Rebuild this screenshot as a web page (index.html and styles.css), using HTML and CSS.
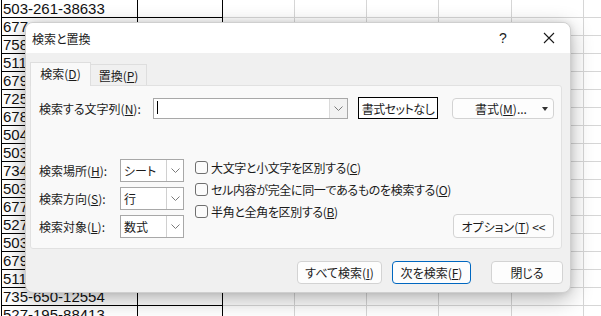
FILE: index.html
```html
<!DOCTYPE html>
<html lang="ja">
<head>
<meta charset="utf-8">
<title>検索と置換</title>
<link rel="stylesheet" href="styles.css">
</head>
<body>
<div class="sheet">
  <div class="row"><div class="c a">503-261-38633</div><div class="c b"></div><div class="c g"></div><div class="c g"></div><div class="c g"></div><div class="c g w73"></div><div class="c g"></div><div class="c g last"></div></div>
  <div class="row"><div class="c a">677-464-91632</div><div class="c b"></div><div class="c g"></div><div class="c g"></div><div class="c g"></div><div class="c g w73"></div><div class="c g"></div><div class="c g last"></div></div>
  <div class="row"><div class="c a">758-310-44721</div><div class="c b"></div><div class="c g"></div><div class="c g"></div><div class="c g"></div><div class="c g w73"></div><div class="c g"></div><div class="c g last"></div></div>
  <div class="row"><div class="c a">511-802-36150</div><div class="c b"></div><div class="c g"></div><div class="c g"></div><div class="c g"></div><div class="c g w73"></div><div class="c g"></div><div class="c g last"></div></div>
  <div class="row"><div class="c a">679-145-20983</div><div class="c b"></div><div class="c g"></div><div class="c g"></div><div class="c g"></div><div class="c g w73"></div><div class="c g"></div><div class="c g last"></div></div>
  <div class="row"><div class="c a">725-918-63402</div><div class="c b"></div><div class="c g"></div><div class="c g"></div><div class="c g"></div><div class="c g w73"></div><div class="c g"></div><div class="c g last"></div></div>
  <div class="row"><div class="c a">678-533-17296</div><div class="c b"></div><div class="c g"></div><div class="c g"></div><div class="c g"></div><div class="c g w73"></div><div class="c g"></div><div class="c g last"></div></div>
  <div class="row"><div class="c a">504-276-90318</div><div class="c b"></div><div class="c g"></div><div class="c g"></div><div class="c g"></div><div class="c g w73"></div><div class="c g"></div><div class="c g last"></div></div>
  <div class="row"><div class="c a">503-641-55827</div><div class="c b"></div><div class="c g"></div><div class="c g"></div><div class="c g"></div><div class="c g w73"></div><div class="c g"></div><div class="c g last"></div></div>
  <div class="row"><div class="c a">734-089-21465</div><div class="c b"></div><div class="c g"></div><div class="c g"></div><div class="c g"></div><div class="c g w73"></div><div class="c g"></div><div class="c g last"></div></div>
  <div class="row"><div class="c a">503-372-68014</div><div class="c b"></div><div class="c g"></div><div class="c g"></div><div class="c g"></div><div class="c g w73"></div><div class="c g"></div><div class="c g last"></div></div>
  <div class="row"><div class="c a">677-820-43391</div><div class="c b"></div><div class="c g"></div><div class="c g"></div><div class="c g"></div><div class="c g w73"></div><div class="c g"></div><div class="c g last"></div></div>
  <div class="row"><div class="c a">527-614-02758</div><div class="c b"></div><div class="c g"></div><div class="c g"></div><div class="c g"></div><div class="c g w73"></div><div class="c g"></div><div class="c g last"></div></div>
  <div class="row"><div class="c a">503-957-31806</div><div class="c b"></div><div class="c g"></div><div class="c g"></div><div class="c g"></div><div class="c g w73"></div><div class="c g"></div><div class="c g last"></div></div>
  <div class="row"><div class="c a">679-238-74150</div><div class="c b"></div><div class="c g"></div><div class="c g"></div><div class="c g"></div><div class="c g w73"></div><div class="c g"></div><div class="c g last"></div></div>
  <div class="row"><div class="c a">511-406-89237</div><div class="c b"></div><div class="c g"></div><div class="c g"></div><div class="c g"></div><div class="c g w73"></div><div class="c g"></div><div class="c g last"></div></div>
  <div class="row"><div class="c a">735-650-12554</div><div class="c b"></div><div class="c g"></div><div class="c g"></div><div class="c g"></div><div class="c g w73"></div><div class="c g"></div><div class="c g last"></div></div>
  <div class="row"><div class="c a">527-195-88413</div><div class="c b"></div><div class="c g"></div><div class="c g"></div><div class="c g"></div><div class="c g w73"></div><div class="c g"></div><div class="c g last"></div></div>
</div>

<div class="dialog">
  <div class="titlebar">
    <span class="title">検索と置換</span>
    <span class="help">?</span>
    <span class="close"><svg width="12" height="12" viewBox="0 0 12 12"><path d="M1 1 L11 11 M11 1 L1 11" stroke="#1a1a1a" stroke-width="1.1" fill="none"/></svg></span>
  </div>
  <div class="dbody">
    <div class="tabs">
      <div class="tab active">検索(<u>D</u>)</div>
      <div class="tab">置換(<u>P</u>)</div>
    </div>
    <div class="panel">
      <div class="find-row">
        <span class="lbl find-lbl">検索する文字列(<u>N</u>):</span>
        <div class="combo">
          <span class="caret"></span>
          <span class="drop combo-drop"><svg width="9" height="5" viewBox="0 0 9 5"><path d="M0.5 0.5 L4.5 4.5 L8.5 0.5" stroke="#7a7a7a" stroke-width="1" fill="none"/></svg></span>
        </div>
        <button class="fmt-none">書式セットなし</button>
        <button class="btn fmt">書式(<u>M</u>)...<span class="tri"></span></button>
      </div>
      <div class="options">
        <div class="selects">
          <div class="sel-row"><span class="lbl sel-lbl">検索場所(<u>H</u>):</span><div class="select"><span class="val">シート</span><span class="drop sel-drop"><svg width="9" height="5" viewBox="0 0 9 5"><path d="M0.5 0.5 L4.5 4.5 L8.5 0.5" stroke="#7a7a7a" stroke-width="1" fill="none"/></svg></span></div></div>
          <div class="sel-row"><span class="lbl sel-lbl">検索方向(<u>S</u>):</span><div class="select"><span class="val">行</span><span class="drop sel-drop"><svg width="9" height="5" viewBox="0 0 9 5"><path d="M0.5 0.5 L4.5 4.5 L8.5 0.5" stroke="#7a7a7a" stroke-width="1" fill="none"/></svg></span></div></div>
          <div class="sel-row"><span class="lbl sel-lbl">検索対象(<u>L</u>):</span><div class="select"><span class="val">数式</span><span class="drop sel-drop"><svg width="9" height="5" viewBox="0 0 9 5"><path d="M0.5 0.5 L4.5 4.5 L8.5 0.5" stroke="#7a7a7a" stroke-width="1" fill="none"/></svg></span></div></div>
        </div>
        <div class="checks">
          <div class="chk"><span class="box"></span>大文字と小文字を区別する(<u>C</u>)</div>
          <div class="chk"><span class="box"></span>セル内容が完全に同一であるものを検索する(<u>O</u>)</div>
          <div class="chk"><span class="box"></span>半角と全角を区別する(<u>B</u>)</div>
        </div>
        <button class="btn opt">オプション(<u>T</u>) &lt;&lt;</button>
      </div>
    </div>
    <div class="actions">
      <button class="btn act all">すべて検索(<u>I</u>)</button>
      <button class="btn act next">次を検索(<u>F</u>)</button>
      <button class="btn act closebtn">閉じる</button>
    </div>
  </div>
</div>
</body>
</html>
```

FILE: styles.css
```css
html, body {
  margin: 0;
  padding: 0;
  background: #ffffff;
  overflow: hidden;
}

body {
  width: 601px;
  height: 316px;
  position: relative;
  font-family: "Noto Sans CJK JP", "Noto Sans", sans-serif;
  color: #1b1b1b;
}

/* ---------- spreadsheet background ---------- */
.sheet {
  padding-left: 1px;
}

.row {
  display: flex;
  height: 18px;
}

.c {
  box-sizing: border-box;
  height: 18px;
  flex: none;
}

.a {
  width: 137px;
  border-left: 1px solid #000;
  border-right: 1px solid #000;
  border-bottom: 1px solid #000;
  font-family: "Liberation Sans", "DejaVu Sans", sans-serif;
  font-size: 15px;
  line-height: 17px;
  padding-left: 1px;
  color: #111;
  white-space: nowrap;
  overflow: hidden;
}

.b {
  width: 85px;
  border-right: 1px solid #000;
  border-bottom: 1px solid #000;
}

.g {
  width: 72px;
  border-right: 1px solid #d6d6d6;
  border-bottom: 1px solid #d6d6d6;
}

.g.w73 {
  width: 73px;
}

.g.last {
  width: 40px;
}

/* ---------- dialog ---------- */
.dialog {
  position: absolute;
  left: 25px;
  top: 22px;
  width: 546px;
  height: 271px;
  box-sizing: border-box;
  border: 1px solid #cfcfcf;
  border-radius: 8px;
  background: #f0f0f0;
  box-shadow: 0 6px 22px rgba(0, 0, 0, 0.30), 0 0 6px rgba(0, 0, 0, 0.10);
  overflow: hidden;
  font-size: 12px;
  font-feature-settings: "palt" 1;
  white-space: nowrap;
}

.titlebar {
  height: 30px;
  background: #ffffff;
  display: flex;
  align-items: center;
  padding-left: 6px;
}

.title {
  font-size: 12px;
  flex: 1;
}

.help {
  font-family: "Liberation Sans", sans-serif;
  font-size: 14px;
  width: 10px;
  margin-right: 34px;
}

.close {
  display: flex;
  margin-right: 15px;
}

.dbody {
  height: 239px;
  box-sizing: border-box;
  padding: 9px 8px 0 4px;
  display: flex;
  flex-direction: column;
}

/* tabs */
.tabs {
  display: flex;
  align-items: flex-end;
  height: 23px;
}

.tab {
  box-sizing: border-box;
  height: 21px;
  border: 1px solid #dedede;
  border-bottom: none;
  background: #f0f0f0;
  display: flex;
  align-items: center;
  justify-content: center;
  font-size: 12px;
}

.tab.active {
  width: 61px;
  height: 24px;
  background: #f9f9f9;
  margin-bottom: -1px;
  position: relative;
  z-index: 1;
  padding-bottom: 2px;
}

.tab:not(.active) {
  width: 56px;
  border-left: none;
}

/* panel */
.panel {
  box-sizing: border-box;
  height: 164px;
  border: 1px solid #e1e1e1;
  border-radius: 0 3px 3px 3px;
  background: #f9f9f9;
  padding: 11px 7px 0 8px;
}

.find-row {
  display: flex;
  align-items: center;
  height: 22px;
}

.lbl {
  white-space: nowrap;
}

.find-lbl {
  width: 114px;
}

.combo {
  box-sizing: border-box;
  width: 195px;
  height: 21px;
  border: 1px solid #a8a8a8;
  background: #fff;
  display: flex;
  align-items: stretch;
  justify-content: space-between;
}

.caret {
  width: 1px;
  background: #000;
  margin: 2px 0 4px 3px;
}

.drop {
  display: flex;
  align-items: center;
  justify-content: center;
}

.combo-drop {
  width: 17px;
  background: #f2f2f2;
  border-left: 1px solid #dadada;
}

button {
  font-family: inherit;
  font-size: 12px;
  color: #1b1b1b;
  padding: 0;
  margin: 0;
  white-space: nowrap;
  font-feature-settings: "palt" 1;
}

.fmt-none {
  box-sizing: border-box;
  width: 80px;
  height: 22px;
  margin-left: 10px;
  border: 1px solid #000;
  background: #fff;
  letter-spacing: -0.5px;
}

.btn {
  box-sizing: border-box;
  border: 1px solid #d3d3d3;
  border-radius: 4px;
  background: #fdfdfd;
  display: flex;
  align-items: center;
  justify-content: center;
}

.fmt {
  width: 102px;
  height: 21px;
  margin-left: 14px;
  position: relative;
  padding-right: 4px;
}

.tri {
  position: absolute;
  right: 5px;
  top: 8px;
  width: 0;
  height: 0;
  border-left: 3px solid transparent;
  border-right: 3px solid transparent;
  border-top: 4px solid #333;
}

/* options area */
.options {
  display: flex;
  align-items: flex-start;
  margin-top: 40px;
  height: 79px;
}

.selects {
  display: flex;
  flex-direction: column;
  gap: 5px;
}

.sel-row {
  display: flex;
  align-items: center;
  height: 23px;
}

.sel-lbl {
  width: 81px;
}

.select {
  box-sizing: border-box;
  width: 64px;
  height: 23px;
  border: 1px solid #a8a8a8;
  background: #fff;
  display: flex;
  align-items: stretch;
}

.val {
  flex: 1;
  display: flex;
  align-items: center;
  padding-left: 3px;
  font-size: 12px;
}

.sel-drop {
  width: 16px;
  border-left: 1px solid #d0d0d0;
}

.checks {
  display: flex;
  flex-direction: column;
  margin-left: 11px;
  margin-top: -3px;
  letter-spacing: -0.35px;
}

.chk {
  display: flex;
  align-items: center;
  height: 22px;
  white-space: nowrap;
}

.box {
  box-sizing: border-box;
  width: 13px;
  height: 13px;
  border: 1px solid #6f6f6f;
  border-radius: 3px;
  background: #fbfbfb;
  margin-right: 3px;
}

.opt {
  width: 101px;
  height: 24px;
  margin-left: auto;
  align-self: flex-end;
}

/* bottom buttons */
.actions {
  display: flex;
  justify-content: flex-end;
  margin-top: 12px;
  margin-right: -1px;
}

.act {
  height: 23px;
}

.all {
  width: 85px;
}

.next {
  width: 79px;
  margin-left: 10px;
  border-color: #0067c0;
}

.closebtn {
  width: 72px;
  margin-left: 20px;
}
```
